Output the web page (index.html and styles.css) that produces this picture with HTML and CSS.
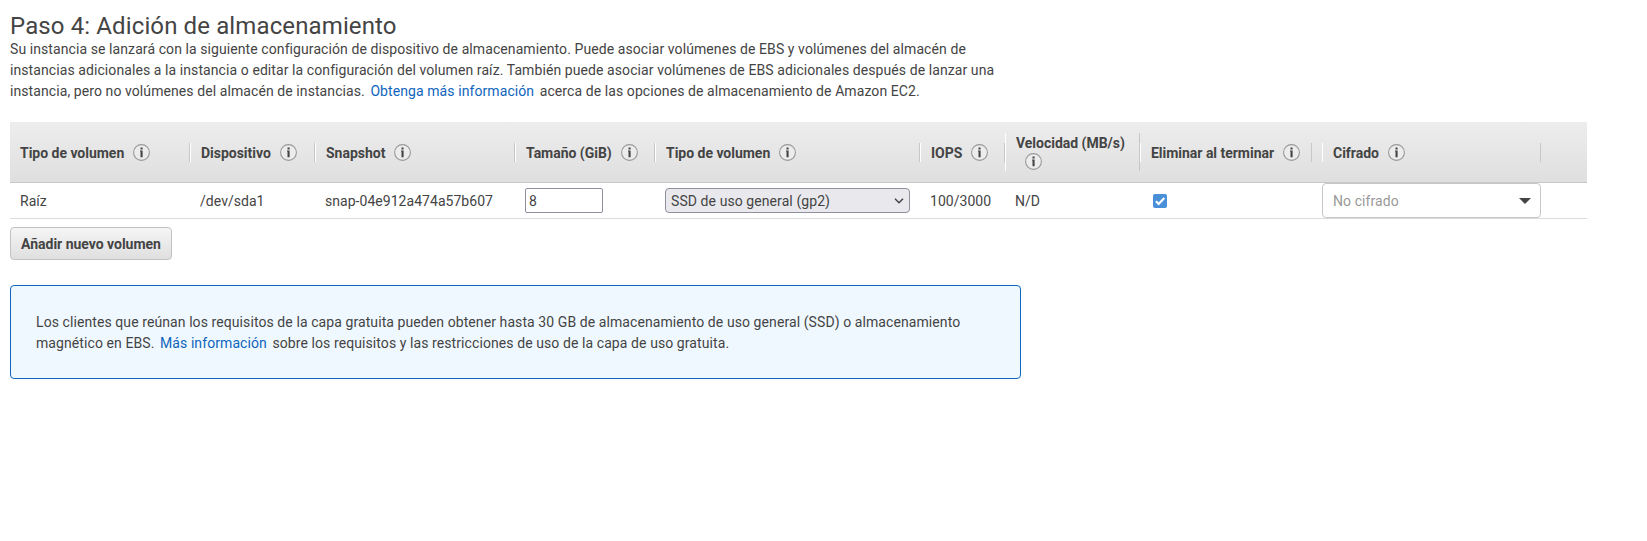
FILE: index.html
```
<!DOCTYPE html>
<html lang="es">
<head>
<meta charset="utf-8">
<title>Paso 4: Adición de almacenamiento</title>
<link rel="stylesheet" href="styles.css">
</head>
<body>
<svg class="defs" width="0" height="0" aria-hidden="true">
  <symbol id="info" viewBox="0 0 17 17">
    <circle cx="8.5" cy="8.5" r="7.9" fill="#ececec" stroke="#999" stroke-width="1.1"/>
    <path d="M7.5 3.6h2.1v1.9H7.5zM7 6.5h2.6v6.8H7.5V7.5H7z" fill="#444"/>
  </symbol>
</svg>
<main class="page">
  <h1 class="title">Paso 4: Adición de almacenamiento</h1>
  <p class="intro">Su instancia se lanzará con la siguiente configuración de dispositivo de almacenamiento. Puede asociar volúmenes de EBS y volúmenes del almacén de<br>instancias adicionales a la instancia o editar la configuración del volumen raíz. También puede asociar volúmenes de EBS adicionales después de lanzar una<br>instancia, pero no volúmenes del almacén de instancias. <a class="link" href="#">Obtenga más información</a> acerca de las opciones de almacenamiento de Amazon EC2.</p>

  <section class="table">
    <div class="row head">
      <div class="th first"><span>Tipo de volumen</span><svg class="info"><use href="#info"/></svg></div>
      <div class="th"><span>Dispositivo</span><svg class="info"><use href="#info"/></svg></div>
      <div class="th"><span>Snapshot</span><svg class="info"><use href="#info"/></svg></div>
      <div class="th"><span>Tamaño (GiB)</span><svg class="info"><use href="#info"/></svg></div>
      <div class="th"><span>Tipo de volumen</span><svg class="info"><use href="#info"/></svg></div>
      <div class="th"><span>IOPS</span><svg class="info"><use href="#info"/></svg></div>
      <div class="th stacked"><span>Velocidad (MB/s)</span><svg class="info"><use href="#info"/></svg></div>
      <div class="th spaced"><span>Eliminar al terminar</span><svg class="info"><use href="#info"/></svg></div>
      <div class="th"><span>Cifrado</span><svg class="info"><use href="#info"/></svg></div>
    </div>
    <div class="row body">
      <div class="td">Raíz</div>
      <div class="td">/dev/sda1</div>
      <div class="td">snap-04e912a474a57b607</div>
      <div class="td control"><input class="size" type="text" value="8"></div>
      <div class="td control"><div class="select"><span>SSD de uso general (gp2)</span><svg width="10" height="6" viewBox="0 0 10 6"><path d="M1 .8l4 4 4-4" fill="none" stroke="#444" stroke-width="1.5"/></svg></div></div>
      <div class="td">100/3000</div>
      <div class="td">N/D</div>
      <div class="td control"><span class="check"><svg width="14" height="14" viewBox="0 0 14 14"><path d="M3 7.3l2.7 2.7L11.3 3.9" fill="none" stroke="#fff" stroke-width="2.2"/></svg></span></div>
      <div class="td control flush"><div class="combo"><span>No cifrado</span><svg width="12" height="6" viewBox="0 0 12 6"><path d="M0 0h12L6 6z" fill="#444"/></svg></div></div>
    </div>
  </section>

  <button class="add" type="button">Añadir nuevo volumen</button>

  <aside class="notice">Los clientes que reúnan los requisitos de la capa gratuita pueden obtener hasta 30 GB de almacenamiento de uso general (SSD) o almacenamiento<br>magnético en EBS. <a class="link" href="#">Más información</a> sobre los requisitos y las restricciones de uso de la capa de uso gratuita.</aside>
</main>
</body>
</html>
```
FILE: styles.css
```
* { box-sizing: border-box; }
body {
  margin: 0;
  background: #fff;
  color: #444;
  font: 14px/21px Roboto, sans-serif;
  letter-spacing: 0.085px;
}
.defs { display: block; }
.page { padding: 10px; white-space: nowrap; }
.title { margin: 0; height: 29px; font-size: 24px; line-height: 32px; font-weight: 400; letter-spacing: 0.12px; }
.intro { margin: 0 0 20px; }
.link { color: #0f65bc; text-decoration: none; margin: 0 2px; }

.table { width: 1577px; margin-bottom: 8px; }
.row { display: grid; grid-template-columns: 180px 125px 200px 140px 265px 85px 135px 182px 219px; align-items: center; }
.head { height: 61px; background: linear-gradient(#ededed, #dfdfdf); border-bottom: 1px solid #c7c7c7; font-weight: 700; letter-spacing: -0.02px; }
.th {
  display: flex;
  align-items: center;
  height: 19px;
  padding-left: 10px;
  border-left: 1px solid #fff;
  border-right: 1px solid #c7c7c7;
}
.th span { padding-top: 2px; }
.th.first { border-left: 0; }
.th.spaced { margin-right: 10px; }
.th.stacked { height: 38px; flex-direction: column; align-items: flex-start; justify-content: center; }
.th.stacked span { padding: 0 0 2px; line-height: 16px; }
.info { width: 17px; height: 17px; margin-left: 9px; flex: none; }
.body { height: 36px; border-bottom: 1px solid #dcdcdc; letter-spacing: 0.04px; }
.td { padding: 2px 0 0 10px; }
.td.control { padding-top: 0; }
.td.flush { padding-left: 0; }
.size {
  display: block;
  width: 78px;
  height: 25px;
  padding: 1px 3px 0;
  border: 1px solid #8f8f9d;
  border-radius: 2px;
  background: #fff;
  color: #444;
  font: inherit;
}
.select, .combo { display: flex; align-items: center; justify-content: space-between; letter-spacing: 0.08px; }
.select span, .combo span { padding-top: 1px; }
.select { width: 245px; height: 25px; padding: 0 5px; border: 1px solid #8f8f9d; border-radius: 4px; background: #e9e9ed; }
.check { display: block; width: 14px; height: 14px; margin-left: 3px; border-radius: 2px; background: #4a90d9; }
.check svg { display: block; }
.combo { width: 219px; height: 35px; padding: 0 9px 0 10px; border: 1px solid #c7c7c7; border-radius: 4px; color: #999; }

.add {
  display: block;
  width: 162px;
  height: 33px;
  margin-bottom: 25px;
  padding: 1px 0 0;
  border: 1px solid #c2c2c2;
  border-radius: 4px;
  background: linear-gradient(#f5f5f5, #dfdfdf);
  color: #444;
  font: inherit;
  font-weight: 700;
  letter-spacing: -0.02px;
}
.notice { width: 1011px; height: 94px; padding: 26px 25px; border: 1px solid #0f65bc; border-radius: 4px; background: #f0f8ff; }
```
